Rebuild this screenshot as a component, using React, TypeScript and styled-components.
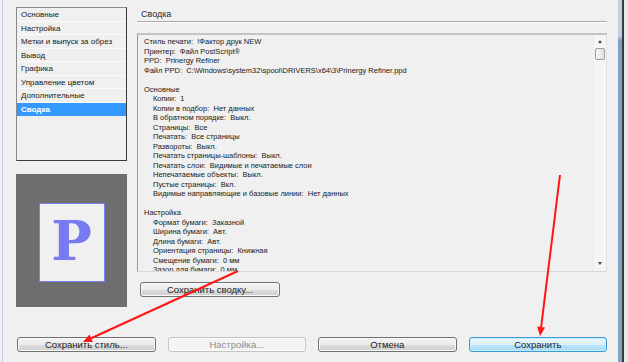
import React from "react";
import styled, { createGlobalStyle } from "styled-components";

const GlobalStyle = createGlobalStyle`
   html, body {
      margin: 0;
      padding: 0;
      background: #f0f0f0;
   }
   * {
      box-sizing: border-box;
   }
`;

const Window = styled.div`
   position: relative;
   width: 628px;
   height: 362px;
   overflow: hidden;
   display: flex;
   background: #f0f0f0;
   font-family: "Liberation Sans", Arial, sans-serif;
   color: #1a1a1a;
`;

const LeftFrame = styled.div`
   width: 3px;
   flex: none;
   border-left: 2px solid #f0f0f0;
   background: #c3d0df;
`;

const RightFrame = styled.div`
   width: 10px;
   flex: none;
   display: flex;
   & > span:nth-child(1) {
      width: 4px;
      background: linear-gradient(#bfd0e3 0, #bfd0e3 36px, #7f9fc6 40px, #86a3c7 100%);
   }
   & > span:nth-child(2) {
      width: 2px;
      background: #3a3a3a;
   }
   & > span:nth-child(3) {
      flex: 1;
      background: #e8e8e8;
   }
`;

const Body = styled.div`
   flex: 1;
   display: flex;
   flex-direction: column;
   padding: 7px 11px 0 13px;
`;

const Top = styled.div`
   display: flex;
   gap: 10px;
`;

const LeftColumn = styled.div`
   width: 111px;
   flex: none;
   display: flex;
   flex-direction: column;
   gap: 13px;
`;

const NavList = styled.div`
   height: 154px;
   border: 1px solid #8a8a8a;
   border-right-color: #3c3c3c;
   border-bottom-color: #3c3c3c;
   background: #f0f0f0;
   display: flex;
   flex-direction: column;
`;

const NavItem = styled.div<{ $active?: boolean }>`
   height: 13.5px;
   line-height: 13px;
   padding-left: 4px;
   font-size: 8px;
   white-space: nowrap;
   border-bottom: 1px solid ${(p) => (p.$active ? "#3399ff" : "#fbfbfb")};
   background: ${(p) => (p.$active ? "#3399ff" : "transparent")};
   color: ${(p) => (p.$active ? "#ffffff" : "#1a1a1a")};
   font-weight: ${(p) => (p.$active ? 700 : 400)};
`;

const Preview = styled.div`
   height: 133px;
   background: #6e6e6e;
   display: flex;
   align-items: center;
   justify-content: center;
`;

const Sheet = styled.div`
   width: 66px;
   height: 79px;
   margin-top: 3px;
   background: #f0f0f0;
   border: 1px solid #7d7dff;
   display: flex;
   align-items: center;
   justify-content: center;
   font-family: "DejaVu Serif", "Liberation Serif", serif;
   font-weight: 700;
   font-size: 54px;
   line-height: 1;
   padding-bottom: 2px;
   color: #7a7af0;
`;

const RightColumn = styled.div`
   flex: 1;
   display: flex;
   flex-direction: column;
`;

const Title = styled.div`
   font-size: 9px;
   line-height: 14px;
   padding-left: 4px;
   color: #1e2a3a;
   border-bottom: 1px solid #a9a9a9;
   box-shadow: 0 1px 0 #ffffff;
   height: 15px;
`;

const SummaryBox = styled.div`
   margin-top: 11px;
   height: 239px;
   display: flex;
   border-top: 2px solid #c4c4c4;
   border-left: 1px solid #9a9a9a;
   border-bottom: 1px solid #d8d8d8;
   background: #f0f0f0;
`;

const SummaryText = styled.div`
   flex: 1;
   overflow: hidden;
   padding: 2px 0 0 6px;
   font-size: 7.5px;
   line-height: 9.5px;
   white-space: pre;
`;

const Line = styled.div<{ $indent?: boolean }>`
   height: 9.5px;
   padding-left: ${(p) => (p.$indent ? "9px" : "0")};
`;

const ScrollTrack = styled.div`
   width: 14px;
   flex: none;
   display: flex;
   flex-direction: column;
   align-items: center;
   background: #f5f5f5;
   border-left: 1px solid #ececec;
   border-right: 1px solid #e2e2e2;
   padding-top: 5px;
`;

const Arrow = styled.div<{ $down?: boolean }>`
   width: 0;
   height: 0;
   border-left: 2.5px solid transparent;
   border-right: 2.5px solid transparent;
   ${(p) => (p.$down ? "border-top: 3px solid #4a4a4a;" : "border-bottom: 3px solid #4a4a4a;")}
   ${(p) => (p.$down ? "margin-top: auto; margin-bottom: 6px;" : "")}
`;

const Thumb = styled.div`
   margin-top: 5px;
   width: 10px;
   height: 12px;
   border: 1px solid #9c9c9c;
   border-radius: 2px;
   background: linear-gradient(90deg, #f6f6f6, #e2e2e2);
`;

const Button = styled.button<{ $primary?: boolean }>`
   height: 15px;
   padding: 0;
   font-family: "Liberation Sans", Arial, sans-serif;
   font-size: 9.5px;
   line-height: 13px;
   color: ${(p) => (p.disabled ? "#8d8d8d" : "#1a1a1a")};
   border: 1px solid ${(p) => (p.$primary ? "#3c9ad4" : p.disabled ? "#c4c4c4" : "#717171")};
   border-radius: 3px;
   background: ${(p) =>
      p.$primary
         ? "linear-gradient(#eaf6fd 0%, #d9f0fc 50%, #bee6fd 51%, #a7d9f5 100%)"
         : p.disabled
           ? "#f4f4f4"
           : "linear-gradient(#f4f4f4 0%, #ebebeb 50%, #dddddd 51%, #cfcfcf 100%)"};
   box-shadow: ${(p) => (p.$primary ? "inset 0 0 0 1px #c6ecfd" : "inset 0 0 0 1px #fafafa")};
`;

const SummaryButton = styled(Button)`
   margin-top: 10px;
   margin-left: 3px;
   width: 140px;
`;

const Footer = styled.div`
   margin-top: 30px;
   margin-left: 1px;
   display: grid;
   grid-template-columns: repeat(4, 1fr);
   column-gap: 12px;
`;

const Overlay = styled.svg`
   position: absolute;
   left: 0;
   top: 0;
   pointer-events: none;
`;

type Row = { text: string; indent?: boolean };

const rows: Row[] = [
   { text: "Стиль печати:  !Фактор друк NEW" },
   { text: "Принтер:  Файл PostScript®" },
   { text: "PPD:  Prinergy Refiner" },
   { text: "Файл PPD:  C:\\Windows\\system32\\spool\\DRIVERS\\x64\\3\\Prinergy Refiner.ppd" },
   { text: "" },
   { text: "Основные" },
   { text: "Копии:  1", indent: true },
   { text: "Копии в подбор:  Нет данных", indent: true },
   { text: "В обратном порядке:  Выкл.", indent: true },
   { text: "Страницы:  Все", indent: true },
   { text: "Печатать:  Все страницы", indent: true },
   { text: "Развороты:  Выкл.", indent: true },
   { text: "Печатать страницы-шаблоны:  Выкл.", indent: true },
   { text: "Печатать слои:  Видимые и печатаемые слои", indent: true },
   { text: "Непечатаемые объекты:  Выкл.", indent: true },
   { text: "Пустые страницы:  Вкл.", indent: true },
   { text: "Видимые направляющие и базовые линии:  Нет данных", indent: true },
   { text: "" },
   { text: "Настройка" },
   { text: "Формат бумаги:  Заказной", indent: true },
   { text: "Ширина бумаги:  Авт.", indent: true },
   { text: "Длина бумаги:  Авт.", indent: true },
   { text: "Ориентация страницы:  Книжная", indent: true },
   { text: "Смещение бумаги:  0 мм", indent: true },
   { text: "Зазор для бумаги:  0 мм", indent: true },
];

const navItems = [
   "Основные",
   "Настройка",
   "Метки и выпуск за обрез",
   "Вывод",
   "Графика",
   "Управление цветом",
   "Дополнительные",
   "Сводка",
];

const RedArrow: React.FC<{ x1: number; y1: number; x2: number; y2: number }> = ({ x1, y1, x2, y2 }) => {
   const a = Math.atan2(y2 - y1, x2 - x1);
   const len = 9;
   const w = 4;
   const bx = x2 - len * Math.cos(a);
   const by = y2 - len * Math.sin(a);
   const px = -Math.sin(a) * w;
   const py = Math.cos(a) * w;
   return (
      <g>
         <line x1={x1} y1={y1} x2={bx} y2={by} stroke="#ff1515" strokeWidth={2} />
         <polygon points={`${x2},${y2} ${bx + px},${by + py} ${bx - px},${by - py}`} fill="#ff1515" />
      </g>
   );
};

export default function App() {
   return (
      <Window>
         <GlobalStyle />
         <LeftFrame />
         <Body>
            <Top>
               <LeftColumn>
                  <NavList>
                     {navItems.map((x) => (
                        <NavItem key={x} $active={x === "Сводка"}>
                           {x}
                        </NavItem>
                     ))}
                  </NavList>
                  <Preview>
                     <Sheet>P</Sheet>
                  </Preview>
               </LeftColumn>
               <RightColumn>
                  <Title>Сводка</Title>
                  <SummaryBox>
                     <SummaryText>
                        {rows.map((r, i) => (
                           <Line key={i} $indent={r.indent}>
                              {r.text}
                           </Line>
                        ))}
                     </SummaryText>
                     <ScrollTrack>
                        <Arrow />
                        <Thumb />
                        <Arrow $down />
                     </ScrollTrack>
                  </SummaryBox>
                  <SummaryButton>Сохранить сводку...</SummaryButton>
               </RightColumn>
            </Top>
            <Footer>
               <Button>Сохранить стиль...</Button>
               <Button disabled>Настройка...</Button>
               <Button>Отмена</Button>
               <Button $primary>Сохранить</Button>
            </Footer>
         </Body>
         <RightFrame>
            <span />
            <span />
            <span />
         </RightFrame>
         <Overlay width={628} height={362}>
            <RedArrow x1={238} y1={271} x2={83} y2={342} />
            <RedArrow x1={560} y1={175} x2={540} y2={336} />
         </Overlay>
      </Window>
   );
}
